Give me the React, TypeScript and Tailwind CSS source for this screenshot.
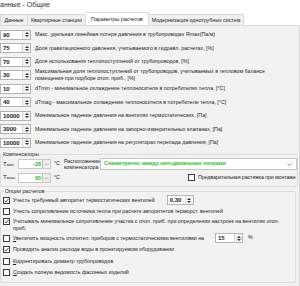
const params = [
  { v: "90", t: ["Макс. удельная линейная потеря давления в трубопроводах Rmax(Па/м)"] },
  { v: "75", t: ["Доля гравитационного давления, учитываемого в гидравл. расчетах, [%]"] },
  { v: "70", t: ["Доля использования теплопоступлений от трубопроводов, [%]"] },
  {
    v: "30",
    t: [
      "Максимальная доля теплопоступлений от трубопроводов, учитываемых в тепловом балансе",
      "помещения при подборе отоп. приб., [%]",
    ],
  },
  { v: "10", t: ["dTmin - минимальное охлаждение теплоносителя в потребителях тепла, [°C]"] },
  { v: "40", t: ["dTmag - максимальное охлаждение теплоносителя в потребителе тепла, [°C]"] },
  { v: "10000", t: ["Минимальное падение давления на вентилях термостатических, [Па]"] },
  { v: "3000", t: ["Минимальное падение давления на запорно-измерительных клапанах, [Па]"] },
  { v: "10000", t: ["Минимальное падение давления на регуляторах перепада давления, [Па]"] },
];

function Arrows() {
  return (
    <div className="flex w-[8px] flex-col items-center justify-center gap-[1px] border-l border-[#d6d6d6] bg-[#f3f3f3]">
      <svg width="4" height="2" viewBox="0 0 4 2">
        <path d="M0 2L2 0L4 2Z" fill="#333" />
      </svg>
      <svg width="4" height="2" viewBox="0 0 4 2">
        <path d="M0 0L2 2L4 0Z" fill="#333" />
      </svg>
    </div>
  );
}

function Spin({ value, w }: { value: string; w: string }) {
  return (
    <div className={`flex h-[10px] ${w} shrink-0 border border-[#b4b4b4] bg-white`}>
      <div className="flex-1 pl-[2px] text-[6px] font-bold leading-[8px] text-[#1a1a1a]">{value}</div>
      <Arrows />
    </div>
  );
}

function Check({ on, children }: { on?: boolean; children: React.ReactNode }) {
  return (
    <div className="flex items-start gap-[3px] whitespace-nowrap">
      <div className="flex h-[7px] w-[7px] shrink-0 items-center justify-center border border-[#3c3c3c] bg-white">
        {on && (
          <svg width="5" height="5" viewBox="0 0 5 5">
            <path d="M0.5 2.6L2 4L4.5 0.8" fill="none" stroke="#222" strokeWidth="0.8" />
          </svg>
        )}
      </div>
      <div className="leading-[7px]">{children}</div>
    </div>
  );
}

function Temp({ label, sub, value }: { label: string; sub: string; value: string }) {
  return (
    <div className="flex items-center">
      <div className="w-[17px] pl-[2px] text-[6px]">
        {label}
        <span className="text-[4px]">{sub}</span>
      </div>
      <div className="flex h-[10px] w-[33px] border border-[#c8c8c8] bg-white">
        <div className="flex-1 pr-[1px] text-right text-[5.5px] font-bold leading-[8px] text-[#26c026]">{value}</div>
        <div className="w-[8px] border-l border-[#bdbdbd] bg-[#ececec] text-center text-[5px] leading-[6px]">...</div>
      </div>
      <div className="ml-[3px]">°C</div>
    </div>
  );
}

export default function App() {
  return (
    <div className="h-[286px] w-[300px] overflow-hidden bg-white font-['Liberation_Sans',Arial,sans-serif] text-[5.3px] text-[#222]">
      <div className="h-[12px] pt-[1px] text-[7px] leading-[7px] text-[#333]">анные - Общие</div>

      <div className="flex h-[13px] items-end whitespace-nowrap leading-[6px]">
        <div className="flex h-[11px] w-[28px] items-center justify-center border border-b-0 border-[#d9d9d9] bg-[#f0f0f0]">Данные</div>
        <div className="flex h-[11px] w-[58px] items-center justify-center border border-b-0 border-l-0 border-[#d9d9d9] bg-[#f0f0f0]">
          Квартирные станции
        </div>
        <div className="flex h-[13px] w-[63px] items-center justify-center border border-b-0 border-l-0 border-[#d9d9d9] bg-white">
          Параметры расчетов
        </div>
        <div className="flex h-[11px] w-[95px] items-center justify-center border border-b-0 border-l-0 border-[#d9d9d9] bg-[#f0f0f0]">
          Модернизация однотрубных систем
        </div>
      </div>

      <div className="h-[262px] w-[300px] border-r border-t border-[#d9d9d9] bg-[#f2f2f2] pr-[1px] pt-[2px]">
        <div className="flex flex-col">
          {params.map((p, i) => (
            <div key={i} className="flex h-[13.5px] items-center gap-[4px]">
              <Spin value={p.v} w="w-[31px]" />
              <div className="leading-[7px]">
                {p.t.map((l, j) => (
                  <div key={j} className="whitespace-nowrap">
                    {l}
                  </div>
                ))}
              </div>
            </div>
          ))}
        </div>

        <fieldset className="mr-[2px] mt-[1px] h-[36px] rounded-[2px] border border-[#dcdcdc]">
          <legend className="ml-[1px] px-[1px] leading-[7px]">Компенсаторы</legend>
          <div className="flex h-[13px] items-center">
            <Temp label="T" sub="мин" value="-28" />
            <div className="ml-[4px] w-[36px] leading-[6px]">
              <div>Расположение</div>
              <div>компенсатора</div>
            </div>
            <div className="flex h-[12px] w-[197px] items-center justify-between border border-[#c4c4c4] bg-white pl-[3px] pr-[4px]">
              <span className="font-bold text-[#2fc22f]">Симметрично между неподвижными опорами</span>
              <svg width="5" height="3" viewBox="0 0 5 3">
                <path d="M0.5 0.5L2.5 2.5L4.5 0.5" fill="none" stroke="#555" strokeWidth="0.7" />
              </svg>
            </div>
          </div>
          <div className="flex h-[14px] items-center">
            <Temp label="T" sub="макс" value="95" />
            <div className="ml-[128px] tracking-[-0.1px]">
              <Check>Предварительная растяжка при монтаже</Check>
            </div>
          </div>
        </fieldset>

        <fieldset className="mr-[2px] mt-[1px] h-[95px] rounded-[2px] border border-[#dcdcdc] pl-[2px]">
          <legend className="ml-[1px] px-[1px] leading-[7px]">Опции расчетов</legend>
          <div className="flex h-[11.5px] items-center gap-[12px]">
            <Check on>Учесть требуемый авторитет термостатических вентилей</Check>
            <Spin value="0,30" w="w-[27px]" />
          </div>
          <div className="flex h-[11.5px] items-center">
            <Check>Учесть сопротивление источника тепла при расчете авторитетов терморст. вентилей</Check>
          </div>
          <div className="flex h-[15px] items-center">
            <Check on>
              <div>Учитывать минимальное сопротивление участка с отоп. приб. при определении настроек на вентилях отоп.</div>
              <div>приб.</div>
            </Check>
          </div>
          <div className="flex h-[11.5px] items-center">
            <Check>
              <span className="underline">У</span>величить мощность отопител. приборов с термостатическими вентилями на
            </Check>
            <div className="ml-[11px]">
              <Spin value="15" w="w-[28px]" />
            </div>
            <div className="ml-[5px]">%</div>
          </div>
          <div className="flex h-[11.5px] items-center">
            <Check on>Проводить анализ расхода воды в проектируемом оборудовании</Check>
          </div>
          <div className="flex h-[11.5px] items-center">
            <Check>
              <span className="underline">К</span>орректировать диаметр трубопроводов
            </Check>
          </div>
          <div className="flex h-[11.5px] items-center">
            <Check>
              <span className="underline">С</span>оздать полную ведомость фасонных изделий
            </Check>
          </div>
        </fieldset>
      </div>
    </div>
  );
}
